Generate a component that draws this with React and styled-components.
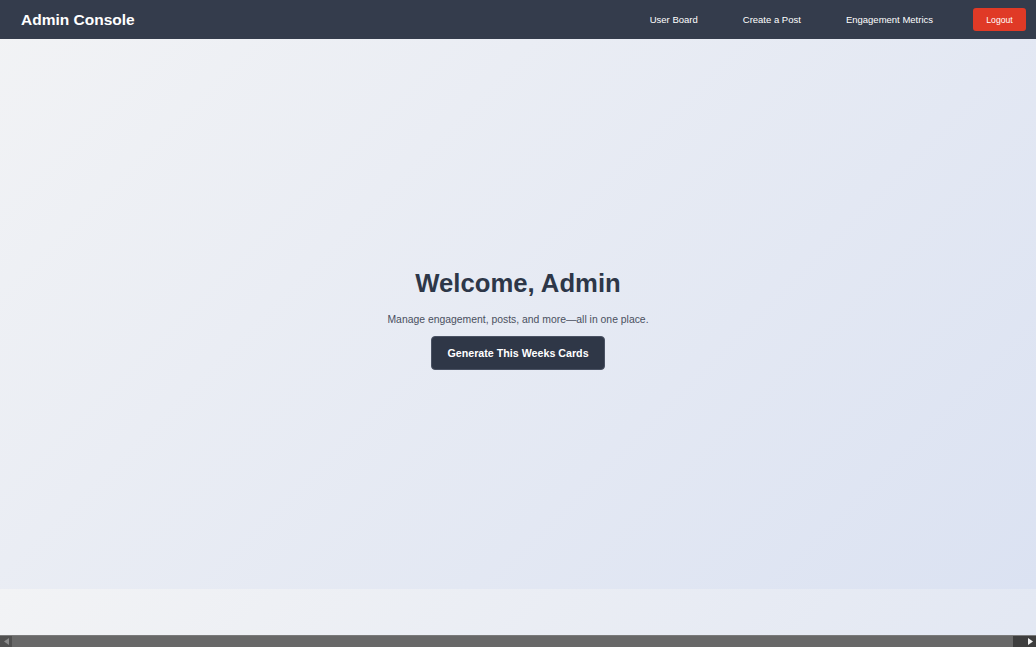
import React from 'react';
import styled, { createGlobalStyle } from 'styled-components';

const GlobalStyle = createGlobalStyle`
  body {
    margin: 0;
    font-family: "Liberation Sans", Arial, sans-serif;
    background: linear-gradient(135deg, #f2f3f5 0%, #dbe2f2 100%);
  }
  * { box-sizing: border-box; }
`;

const links = ['User Board', 'Create a Post', 'Engagement Metrics'];

const App = () => (
  <>
    <GlobalStyle />
    <NavBar>
      <Brand>Admin Console</Brand>
      <NavLinks>
        {links.map((l) => (
          <NavLink key={l} href="#">{l}</NavLink>
        ))}
        <LogoutButton>Logout</LogoutButton>
      </NavLinks>
    </NavBar>
    <Hero>
      <Title>Welcome, Admin</Title>
      <Subtitle>Manage engagement, posts, and more—all in one place.</Subtitle>
      <PrimaryButton>Generate This Weeks Cards</PrimaryButton>
    </Hero>
    <ScrollBar>
      <ScrollArrow>
        <svg width="5" height="7" viewBox="0 0 5 7"><path d="M5 0 L0 3.5 L5 7 Z" fill="#8a8a8a" /></svg>
      </ScrollArrow>
      <ScrollThumb />
      <ScrollArrow dark>
        <svg width="5" height="7" viewBox="0 0 5 7"><path d="M0 0 L5 3.5 L0 7 Z" fill="#f2f2f2" /></svg>
      </ScrollArrow>
    </ScrollBar>
  </>
);

export default App;

const NavBar = styled.nav`
  display: flex;
  align-items: center;
  justify-content: space-between;
  height: 39px;
  min-width: 1047px;
  padding: 0 21px;
  background: #343c4c;
  color: #fff;
`;

const Brand = styled.div`
  font-size: 15.5px;
  font-weight: 700;
`;

const NavLinks = styled.div`
  display: flex;
  align-items: center;
  gap: 45px;
`;

const NavLink = styled.a`
  color: #fff;
  text-decoration: none;
  font-size: 9.5px;
`;

const LogoutButton = styled.button`
  margin-left: -5px;
  width: 53px;
  height: 23px;
  border: none;
  border-radius: 3px;
  background: #e03a26;
  color: #fff;
  font-family: inherit;
  font-size: 8.6px;
  cursor: pointer;
`;

const Hero = styled.main`
  display: flex;
  flex-direction: column;
  align-items: center;
  justify-content: center;
  min-height: 85vh;
  padding-top: 12px;
  text-align: center;
`;

const Title = styled.h1`
  margin: 0 0 16px;
  font-size: 25.7px;
  font-weight: 700;
  color: #2d3748;
`;

const Subtitle = styled.p`
  margin: 0 0 11px;
  font-size: 10.4px;
  color: #4a5060;
`;

const PrimaryButton = styled.button`
  width: 174px;
  height: 34px;
  border: 1px solid #4a5263;
  border-radius: 4px;
  background: #2f3747;
  color: #fff;
  font-family: inherit;
  font-size: 10.7px;
  font-weight: 700;
  cursor: pointer;
`;

const ScrollBar = styled.div`
  position: fixed;
  left: 0;
  right: 0;
  bottom: 0;
  height: 12px;
  display: flex;
  background: #3e3e3e;
  border-top: 1px solid #7a7a7a;
`;

const ScrollArrow = styled.div`
  width: 12px;
  display: flex;
  align-items: center;
  justify-content: center;
  background: ${(p) => (p.dark ? '#3e3e3e' : '#505050')};
`;

const ScrollThumb = styled.div`
  flex: 0 0 1001px;
  background: #686868;
  margin-right: auto;
`;
